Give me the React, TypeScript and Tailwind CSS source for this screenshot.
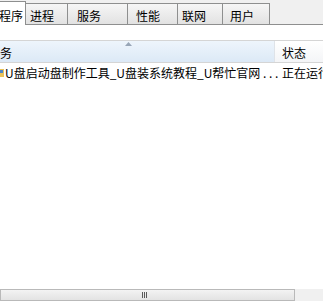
const tabs = [
  { label: '进程', w: 'w-[42px]', pl: 'pl-[4px]' },
  { label: '服务', w: 'w-[60px]', pl: 'pl-[9px]' },
  { label: '性能', w: 'w-[50px]', pl: 'pl-[8px]' },
  { label: '联网', w: 'w-[45px]', pl: 'pl-[4px]' },
  { label: '用户', w: 'w-[47px]', pl: 'pl-[7px]' },
];

export default function App() {
  return (
    <div className="w-[323px] h-[301px] overflow-hidden flex flex-col bg-white text-[12px] text-black font-['Noto_Sans_CJK_SC','Liberation_Sans',sans-serif]">
      {/* tab strip */}
      <div className="h-[25px] shrink-0 flex items-end bg-[#f0f0f0] border-b border-[#8e8f8f]">
        <div className="w-[26px] h-[24px] -mb-px bg-white border-r border-t border-[#8e8f8f] flex items-center pt-[4px] leading-none overflow-hidden">
          <span className="-ml-[1px]">程序</span>
        </div>
        {tabs.map((t) => (
          <div
            key={t.label}
            className={`${t.w} ${t.pl} h-[21px] pt-[3px] border-t border-r border-[#8e8f8f] bg-gradient-to-b from-[#f6f6f6] to-[#e2e2e2] flex items-center leading-none`}
          >
            {t.label}
          </div>
        ))}
      </div>

      {/* list view */}
      <div className="flex-1 flex flex-col pt-[15px]">
        <div className="h-[23px] flex border-t border-b border-[#d5d5d5]">
          <div className="relative w-[275px] border-r border-[#dfe3e8] bg-gradient-to-b from-[#eef5fc] to-[#dce9f6] flex items-center pt-[2px] leading-none">
            <span>务</span>
            <svg className="absolute left-[125px] top-[1px]" width="7" height="4" viewBox="0 0 7 4">
              <path d="M0 4 L3.5 0 L7 4 Z" fill="#97a5b6" />
            </svg>
          </div>
          <div className="flex-1 flex items-center pl-[7px] pt-[2px] leading-none bg-gradient-to-b from-white to-[#f4f5f7]">
            状态
          </div>
        </div>
        <div className="h-[17px] mt-[1px] flex items-center leading-none whitespace-nowrap">
          <div className="w-[275px] flex items-center">
            <svg className="shrink-0" width="4" height="10" viewBox="0 0 4 10">
              <rect x="0" y="1" width="4" height="8" fill="#e9c35a" />
              <rect x="0" y="2" width="3" height="3" fill="#4f86c6" />
            </svg>
            <span className="ml-[1px]">U盘启动盘制作工具_U盘装系统教程_U帮忙官网 . . .</span>
          </div>
          <div className="pl-[7px]">正在运行</div>
        </div>
        <div className="flex-1" />
        {/* horizontal scrollbar */}
        <div className="h-[12px] flex">
          <div className="w-[295px] border border-[#b9b9b9] bg-gradient-to-b from-[#f3f3f3] to-[#e3e3e3] flex items-center justify-center">
            <div className="flex gap-[1px] ml-[-6px]">
              <div className="w-px h-[6px] bg-[#5a5a5a]" />
              <div className="w-px h-[6px] bg-[#5a5a5a]" />
              <div className="w-px h-[6px] bg-[#5a5a5a]" />
            </div>
          </div>
          <div className="flex-1 bg-[#f0f0f0]" />
        </div>
      </div>
    </div>
  );
}
